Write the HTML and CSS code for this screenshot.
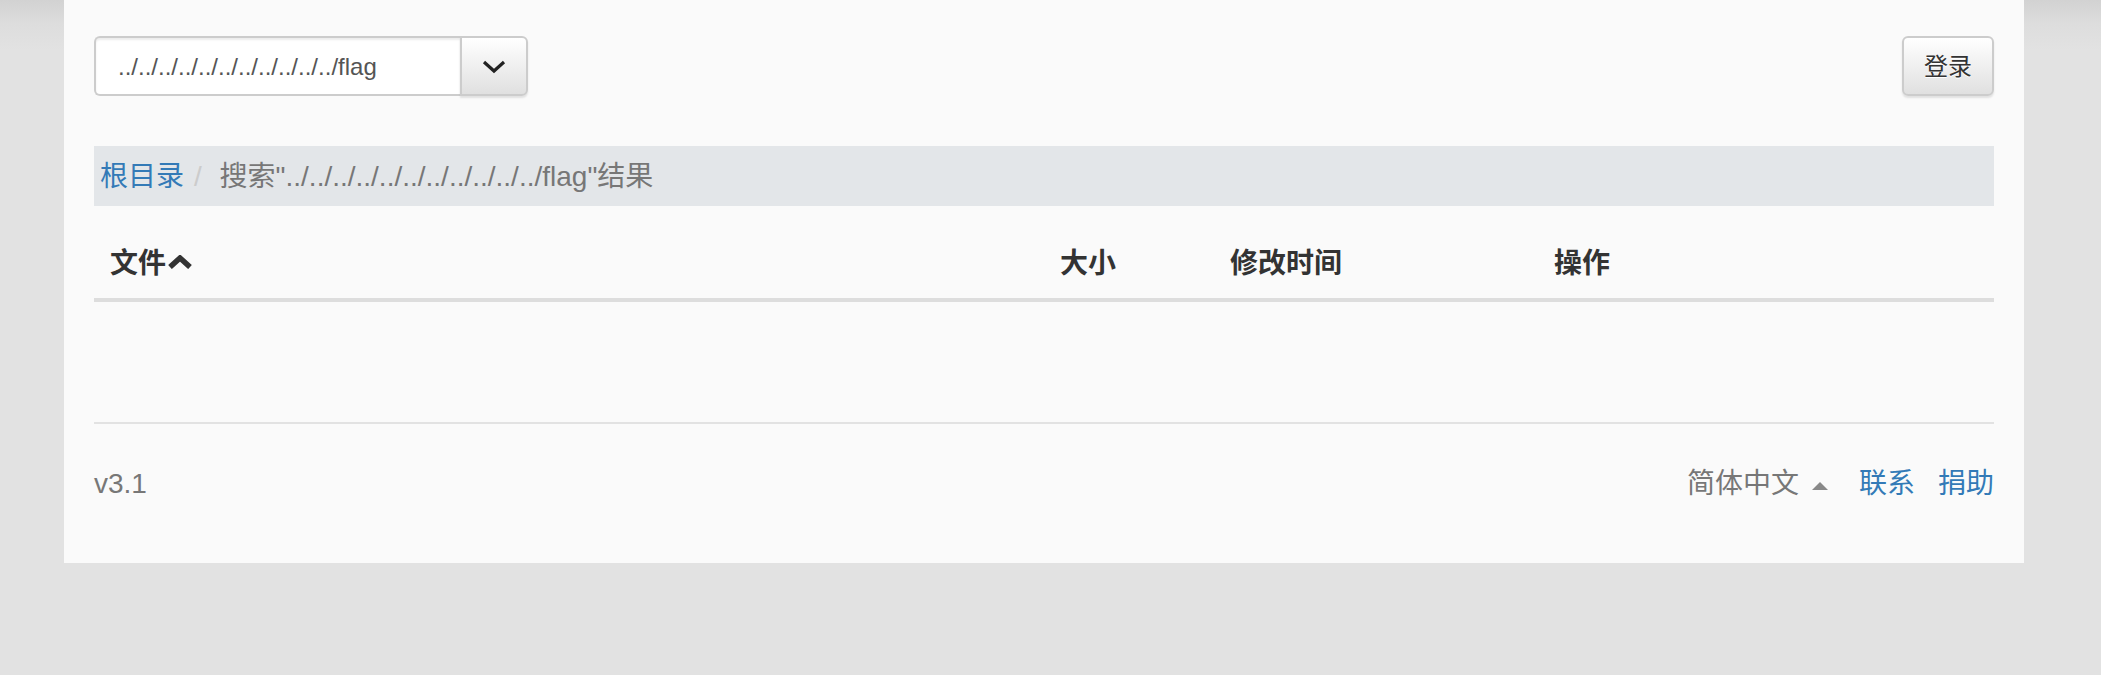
FILE: index.html
```html
<!DOCTYPE html>
<html lang="zh-CN">
<head>
<meta charset="utf-8">
<title>文件</title>
<link rel="stylesheet" href="styles.css">
</head>
<body>
<div class="container">
  <div class="topbar">
    <div class="input-group">
      <div class="search-input">../../../../../../../../../../../flag</div>
      <button class="btn dd-btn" type="button">
        <svg width="24" height="14" viewBox="0 0 24 14"><polyline points="2,2 12,11 22,2" fill="none" stroke="#222" stroke-width="3.2" stroke-linejoin="miter"/></svg>
      </button>
    </div>
    <button class="btn login-btn" type="button">登录</button>
  </div>

  <ol class="breadcrumb">
    <li class="crumb"><a class="link" href="#">根目录</a></li>
    <li class="crumb active"><span class="sep">/&nbsp;</span>搜索"../../../../../../../../../../../flag"结果</li>
  </ol>

  <table class="table">
    <thead>
      <tr>
        <th class="col-name">文件<svg class="sort-icon" width="26" height="14" viewBox="0 0 26 14"><polyline points="3,12 13,3 23,12" fill="none" stroke="#333" stroke-width="5.5" stroke-linejoin="miter"/></svg></th>
        <th class="col-size">大小</th>
        <th class="col-time">修改时间</th>
        <th class="col-op">操作</th>
      </tr>
    </thead>
    <tbody></tbody>
  </table>

  <hr class="divider">

  <footer class="footer">
    <span class="version">v3.1</span>
    <div class="footer-links">
      <span class="lang">简体中文<span class="caret-up"></span></span>
      <a class="link contact" href="#">联系</a>
      <a class="link donate" href="#">捐助</a>
    </div>
  </footer>
</div>
</body>
</html>
```
FILE: styles.css
```css
html, body {
  margin: 0;
  padding: 0;
}
body {
  background: #e2e2e2 linear-gradient(to bottom, #d2d2d2 0, #dddddd 24px, #e2e2e2 50px) no-repeat;
  font-family: "Liberation Sans", Arial, "Noto Sans CJK SC", sans-serif;
  font-size: 28px;
  line-height: 40px;
  color: #333;
  min-height: 675px;
}
.container {
  width: 1960px;
  box-sizing: border-box;
  margin-left: 64px;
  background: #fafafa;
  padding: 36px 30px 59px 30px;
}
.topbar {
  display: flex;
  justify-content: space-between;
  align-items: flex-start;
  height: 60px;
}
.input-group {
  display: flex;
  width: 434px;
  height: 60px;
}
.search-input {
  flex: 1;
  box-sizing: border-box;
  height: 60px;
  border: 2px solid #ccc;
  border-right: 0;
  border-radius: 6px 0 0 6px;
  background: #fff;
  box-shadow: inset 0 2px 2px rgba(0,0,0,.075);
  color: #555;
  font-size: 24px;
  line-height: 36px;
  padding: 11px 22px 9px 22px;
  white-space: nowrap;
  overflow: hidden;
}
.btn {
  box-sizing: border-box;
  height: 60px;
  border: 2px solid #ccc;
  background: linear-gradient(to bottom, #ffffff 0, #e0e0e0 100%);
  box-shadow: inset 0 2px 0 rgba(255,255,255,.15), 0 2px 2px rgba(0,0,0,.1);
  color: #333;
  font-family: "Liberation Sans", Arial, "Noto Sans CJK SC", sans-serif;
  font-size: 24px;
  line-height: 36px;
  padding: 10px 20px;
  margin: 0;
  cursor: pointer;
  text-shadow: 0 1px 0 #fff;
}
.dd-btn {
  width: 68px;
  padding: 0;
  border-radius: 0 6px 6px 0;
  display: flex;
  align-items: center;
  justify-content: center;
}
.dd-btn svg {
  display: block;
  margin-top: 2px;
}
.login-btn {
  width: 92px;
  padding: 11px 0 9px 0;
  border-radius: 6px;
}
.breadcrumb {
  list-style: none;
  margin: 50px 0 20px 0;
  padding: 11px 6px 9px 6px;
  background: #e3e6e9;
  display: flex;
  line-height: 40px;
  height: 60px;
  box-sizing: border-box;
}
.crumb {
  display: block;
  white-space: nowrap;
}
.crumb.active {
  color: #777;
}
.sep {
  color: #ccc;
  padding: 0 10px;
}
.link {
  color: #337ab7;
  text-decoration: none;
}
.table {
  width: 1900px;
  border-collapse: collapse;
  border-spacing: 0;
  table-layout: fixed;
}
.table th {
  text-align: left;
  font-weight: bold;
  padding: 18px 16px 14px 16px;
  line-height: 40px;
  border-bottom: 4px solid #dddddd;
  color: #333;
  white-space: nowrap;
}
.col-name { width: 918px; }
.col-size { width: 138px; }
.col-time { width: 292px; }
.col-op { width: auto; }
.sort-icon {
  display: inline-block;
  vertical-align: middle;
  margin-left: 1px;
  margin-top: -8px;
}
.divider {
  border: 0;
  border-top: 2px solid #e2e2e2;
  margin: 120px 0 0 0;
  height: 0;
}
.footer {
  display: flex;
  justify-content: space-between;
  margin-top: 40px;
  line-height: 40px;
}
.version {
  color: #777;
}
.footer-links {
  display: flex;
  align-items: center;
}
.lang {
  color: #777;
  display: flex;
  align-items: center;
}
.caret-up {
  display: inline-block;
  width: 0;
  height: 0;
  margin-left: 13px;
  margin-top: 4px;
  border-left: 8px solid transparent;
  border-right: 8px solid transparent;
  border-bottom: 8px solid #888;
}
.contact {
  margin-left: 31px;
}
.donate {
  margin-left: 23px;
}
```
